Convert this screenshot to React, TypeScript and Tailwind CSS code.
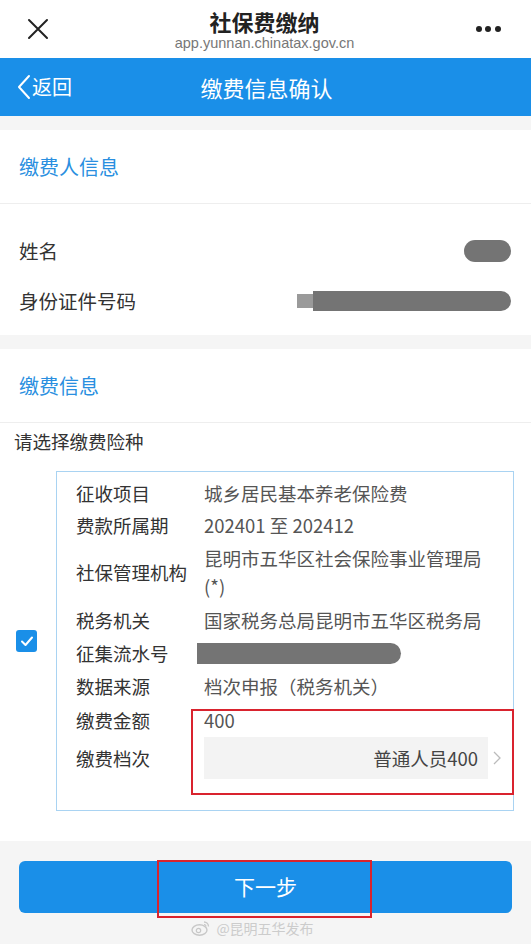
import React from "react";

const font = { fontFamily: '"Noto Sans CJK SC", "Noto Sans", sans-serif' };

function Row({ label, children, className = "" }: { label: string; children: React.ReactNode; className?: string }) {
  return (
    <div className={`flex ${className}`}>
      <div className="w-[128px] shrink-0 text-[18.5px] text-[#333]">{label}</div>
      <div className="flex-1 text-[18.5px] text-[#555]">{children}</div>
    </div>
  );
}

export default function App() {
  return (
    <div className="w-[531px] h-[944px] bg-[#f5f5f5] overflow-hidden relative" style={font}>
      {/* Top browser bar */}
      <div className="h-[58px] bg-white flex items-center justify-between pl-[26px] pr-[30px]">
        <svg width="22" height="22" viewBox="0 0 22 22" className="ml-[1px]">
          <path d="M2 2 L20 20 M20 2 L2 20" stroke="#222" strokeWidth="2" strokeLinecap="round" />
        </svg>
        <div className="flex flex-col items-center leading-none ml-[4px]">
          <div className="text-[22px] font-bold text-[#222] leading-[26px]">社保费缴纳</div>
          <div className="text-[14.5px] text-[#777] leading-[16px] mt-[1px]" style={{ fontFamily: '"Liberation Sans", Arial, sans-serif' }}>
            app.yunnan.chinatax.gov.cn
          </div>
        </div>
        <div className="flex gap-[3.5px]">
          <span className="w-[6px] h-[6px] rounded-full bg-[#222]" />
          <span className="w-[6px] h-[6px] rounded-full bg-[#222]" />
          <span className="w-[6px] h-[6px] rounded-full bg-[#222]" />
        </div>
      </div>

      {/* Blue header */}
      <div className="h-[58px] bg-[#1a8fe8] relative flex items-center justify-center">
        <div className="absolute left-[17px] top-0 h-full flex items-center text-white text-[20px]">
          <svg width="14" height="28" viewBox="0 0 14 28" className="mr-[1px]">
            <path d="M12 3 L2 14 L12 25" stroke="white" strokeWidth="2" fill="none" strokeLinecap="round" strokeLinejoin="round" />
          </svg>
          <span>返回</span>
        </div>
        <div className="text-white text-[22px] ml-[2px]">缴费信息确认</div>
      </div>

      <div className="h-[14px]" />

      {/* Payer info */}
      <div className="bg-white">
        <div className="h-[74px] flex items-center px-[19px] text-[20px] text-[#2a8fe0] border-b border-[#eeeeee]">缴费人信息</div>
        <div className="h-[131px] flex flex-col px-[19px] pt-[32px]">
          <div className="flex items-center justify-between h-[30px]">
            <span className="text-[19.5px] text-[#333]">姓名</span>
            <span className="w-[47px] h-[22px] rounded-full bg-[#747474] mr-[1px]" />
          </div>
          <div className="flex items-center justify-between h-[30px] mt-[20px]">
            <span className="text-[19.5px] text-[#333]">身份证件号码</span>
            <span className="flex items-center mr-[1px]">
              <span className="w-[16px] h-[14px] bg-[#9a9a9a]" />
              <span className="w-[198px] h-[20px] rounded-r-full bg-[#747474]" />
            </span>
          </div>
        </div>
      </div>

      <div className="h-[14px]" />

      {/* Payment info */}
      <div className="bg-white h-[492px]">
        <div className="h-[74px] flex items-center px-[19px] text-[20px] text-[#2a8fe0] border-b border-[#eeeeee]">缴费信息</div>
        <div className="px-[14px] pt-[6px] text-[18.5px] text-[#333] leading-[24px]">请选择缴费险种</div>
        <div className="flex mt-[18px] items-center">
          <div className="w-[56px] flex justify-start pl-[16px]">
            <div className="w-[21px] h-[22px] rounded-[3px] bg-[#1a8fe8] flex items-center justify-center">
              <svg width="16" height="16" viewBox="0 0 16 16">
                <path d="M3 8.5 L6.5 12 L13 4.5" stroke="white" strokeWidth="2" fill="none" strokeLinecap="round" strokeLinejoin="round" />
              </svg>
            </div>
          </div>
          <div className="w-[458px] h-[340px] border border-[#a9d3f2] pl-[19px] pr-[26px] pt-[8px] flex flex-col leading-[26px]">
            <Row label="征收项目">城乡居民基本养老保险费</Row>
            <Row label="费款所属期" className="mt-[6px]">202401 至 202412</Row>
            <div className="flex mt-[6px]">
              <div className="w-[128px] shrink-0 text-[18.5px] text-[#333] flex items-center">社保管理机构</div>
              <div className="flex-1 text-[18.5px] text-[#555] leading-[28px]">昆明市五华区社会保险事业管理局(*)</div>
            </div>
            <Row label="税务机关" className="mt-[7px]">国家税务总局昆明市五华区税务局</Row>
            <Row label="征集流水号" className="mt-[7px]">
              <div className="h-[26px] flex items-center">
                <span className="w-[204px] h-[21px] rounded-r-full bg-[#747474] block ml-[-7px]" />
              </div>
            </Row>
            <Row label="数据来源" className="mt-[7px]">档次申报（税务机关）</Row>
            <Row label="缴费金额" className="mt-[8px]">400</Row>
            <div className="flex mt-[4px] items-center">
              <div className="w-[128px] shrink-0 text-[18.5px] text-[#333]">缴费档次</div>
              <div className="flex-1 flex items-center">
                <div className="w-[284px] h-[42px] bg-[#f3f3f3] flex items-center justify-end pr-[10px] text-[18.5px] text-[#444]">普通人员400</div>
                <svg width="10" height="16" viewBox="0 0 10 16" className="ml-[4px]">
                  <path d="M2 2 L8 8 L2 14" stroke="#bbb" strokeWidth="1.3" fill="none" />
                </svg>
              </div>
            </div>
          </div>
        </div>
      </div>

      {/* Footer */}
      <div className="pt-[20px] px-[19px]">
        <div className="h-[52px] rounded-[6px] bg-[#1a8fe8] flex items-center justify-center text-white text-[21px]">下一步</div>
        <div className="flex items-center justify-center mt-[4px] text-[14px] text-[#ccc] h-[22px] ml-[-26px]">
          <svg width="20" height="16" viewBox="0 0 20 16" className="mr-[5px]">
            <ellipse cx="8.5" cy="10" rx="7.5" ry="5.2" fill="none" stroke="#c8c8c8" strokeWidth="1.4" />
            <circle cx="7.5" cy="10.5" r="2.2" fill="none" stroke="#c8c8c8" strokeWidth="1.2" />
            <path d="M13 2 A4.5 4.5 0 0 1 17.5 6.5" stroke="#c8c8c8" strokeWidth="1.3" fill="none" />
            <path d="M13 4.5 A2 2 0 0 1 15 6.5" stroke="#c8c8c8" strokeWidth="1.1" fill="none" />
          </svg>
          <span>@昆明五华发布</span>
        </div>
      </div>

      {/* Red annotation boxes */}
      <div className="absolute left-[191px] top-[709px] w-[323px] h-[86px] border-2 border-[#d9232e]" />
      <div className="absolute left-[157px] top-[860px] w-[215px] h-[58px] border-2 border-[#d9232e]" />
    </div>
  );
}
